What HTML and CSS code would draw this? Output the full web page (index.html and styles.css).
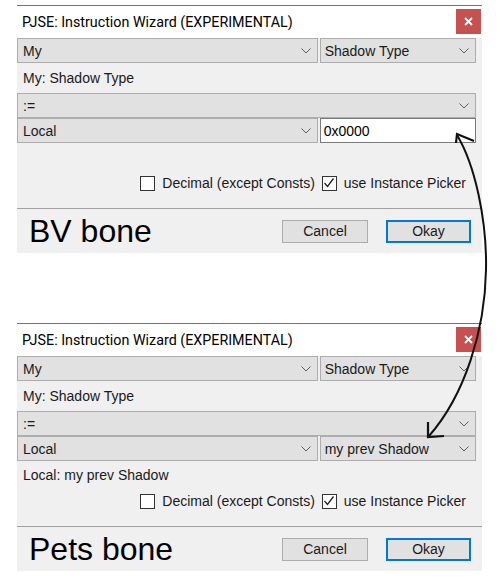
FILE: index.html
```html
<!DOCTYPE html>
<html lang="en">
<head>
  <meta charset="UTF-8">
  <title>PJSE Instruction Wizard</title>
  <link rel="stylesheet" href="styles.css">
</head>
<body>
  <div class="page">
    <div class="dialog">
      <div class="titlebar">
        <span class="title">PJSE: Instruction Wizard (EXPERIMENTAL)</span>
        <div class="close"><svg width="9" height="9" viewBox="0 0 9 9"><path d="M1 1L8 8M8 1L1 8" stroke="#fff" stroke-width="1.8"/></svg></div>
      </div>
      <div class="body">
        <div class="row">
          <div class="combo wide"><span>My</span><svg class="chev" width="10" height="6" viewBox="0 0 10 6"><path d="M0.5 0.5L5 5L9.5 0.5" fill="none" stroke="#606060"/></svg></div>
          <div class="combo narrow"><span>Shadow Type</span><svg class="chev" width="10" height="6" viewBox="0 0 10 6"><path d="M0.5 0.5L5 5L9.5 0.5" fill="none" stroke="#606060"/></svg></div>
        </div>
        <div class="label tall">My: Shadow Type</div>
        <div class="combo full"><span>:=</span><svg class="chev" width="10" height="6" viewBox="0 0 10 6"><path d="M0.5 0.5L5 5L9.5 0.5" fill="none" stroke="#606060"/></svg></div>
        <div class="row">
          <div class="combo wide"><span>Local</span><svg class="chev" width="10" height="6" viewBox="0 0 10 6"><path d="M0.5 0.5L5 5L9.5 0.5" fill="none" stroke="#606060"/></svg></div>
          <div class="textbox narrow">0x0000</div>
        </div>
        <div class="label"></div>
        <div class="checks">
          <span class="box"></span><span class="check-text">Decimal (except Consts)</span>
          <span class="box"><svg width="12" height="12" viewBox="0 0 12 12"><path d="M1.5 6L4.5 9.5L10.5 1.5" fill="none" stroke="#222" stroke-width="1.3"/></svg></span><span class="check-text">use Instance Picker</span>
        </div>
      </div>
      <div class="footer">
        <span class="caption">BV bone</span>
        <div class="buttons">
          <div class="btn">Cancel</div>
          <div class="btn default">Okay</div>
        </div>
      </div>
    </div>

    <div class="dialog second">
      <div class="titlebar">
        <span class="title">PJSE: Instruction Wizard (EXPERIMENTAL)</span>
        <div class="close"><svg width="9" height="9" viewBox="0 0 9 9"><path d="M1 1L8 8M8 1L1 8" stroke="#fff" stroke-width="1.8"/></svg></div>
      </div>
      <div class="body">
        <div class="row">
          <div class="combo wide"><span>My</span><svg class="chev" width="10" height="6" viewBox="0 0 10 6"><path d="M0.5 0.5L5 5L9.5 0.5" fill="none" stroke="#606060"/></svg></div>
          <div class="combo narrow"><span>Shadow Type</span><svg class="chev" width="10" height="6" viewBox="0 0 10 6"><path d="M0.5 0.5L5 5L9.5 0.5" fill="none" stroke="#606060"/></svg></div>
        </div>
        <div class="label tall">My: Shadow Type</div>
        <div class="combo full"><span>:=</span><svg class="chev" width="10" height="6" viewBox="0 0 10 6"><path d="M0.5 0.5L5 5L9.5 0.5" fill="none" stroke="#606060"/></svg></div>
        <div class="row">
          <div class="combo wide"><span>Local</span><svg class="chev" width="10" height="6" viewBox="0 0 10 6"><path d="M0.5 0.5L5 5L9.5 0.5" fill="none" stroke="#606060"/></svg></div>
          <div class="combo narrow"><span>my prev Shadow</span><svg class="chev" width="10" height="6" viewBox="0 0 10 6"><path d="M0.5 0.5L5 5L9.5 0.5" fill="none" stroke="#606060"/></svg></div>
        </div>
        <div class="label">Local: my prev Shadow</div>
        <div class="checks">
          <span class="box"></span><span class="check-text">Decimal (except Consts)</span>
          <span class="box"><svg width="12" height="12" viewBox="0 0 12 12"><path d="M1.5 6L4.5 9.5L10.5 1.5" fill="none" stroke="#222" stroke-width="1.3"/></svg></span><span class="check-text">use Instance Picker</span>
        </div>
      </div>
      <div class="footer">
        <span class="caption">Pets bone</span>
        <div class="buttons">
          <div class="btn">Cancel</div>
          <div class="btn default">Okay</div>
        </div>
      </div>
    </div>

    <!-- hand-drawn arrow linking the two fields -->
    <svg class="arrow" width="500" height="580" viewBox="0 0 500 580">
      <path d="M457 135 C475 165 487 220 486 270 C485 330 465 395 429 436" fill="none" stroke="#111" stroke-width="2"/>
      <path d="M456 143 L457 134 L474 141" fill="none" stroke="#111" stroke-width="2.2"/>
      <path d="M428 422 L428 437 L444 436" fill="none" stroke="#111" stroke-width="2.2"/>
    </svg>
  </div>
</body>
</html>
```

FILE: styles.css
```css
body { margin: 0; background: #fff; font-family: "Liberation Sans", Arial, sans-serif; font-size: 14px; color: #1a1a1a; }
.page { position: relative; width: 500px; height: 580px; padding-top: 5px; box-sizing: border-box; }
.dialog { margin-left: 17px; width: 465px; border-top: 1px solid #737373; }
.dialog.second { margin-top: 70px; }

.titlebar { height: 32px; background: #fff; display: flex; justify-content: space-between; align-items: flex-start; }
.title { font-family: Roboto, "Liberation Sans", sans-serif; font-size: 14.3px; color: #000; line-height: 32px; padding-left: 5px; }
.close { width: 25px; height: 25px; margin: 3px 1px 0 0; background: #c75050; display: flex; align-items: center; justify-content: center; }

.body { background: #f0f0f0; padding: 0 6px 13px 0; }
.row { display: flex; gap: 2px; }
.combo, .textbox { height: 25px; box-sizing: border-box; display: flex; align-items: center; justify-content: space-between; padding: 0 6px 0 5px; }
.combo { background: #e1e1e1; border: 1px solid #adadad; }
.narrow.combo { padding-left: 4px; }
.textbox { background: #fff; border: 1px solid #7a7a7a; padding-left: 3px; color: #000; }
.wide { width: 302px; }
.narrow { width: 157px; }
.full { width: 459px; }
.chev { flex: none; }

.label { height: 28px; line-height: 28px; padding-left: 6px; }
.label.tall { height: 30px; line-height: 30px; }

.checks { height: 24px; display: flex; align-items: center; justify-content: flex-end; padding-right: 10px; }
.box { width: 13px; height: 13px; border: 1px solid #333; background: #fff; margin-right: 7px; display: flex; align-items: center; justify-content: center; }
.check-text { margin-right: 7px; }
.check-text:last-child { margin-right: 0; }

.footer { height: 44px; background: #f0f0f0; border-top: 1px solid #a0a0a0; display: flex; align-items: center; justify-content: space-between; padding: 0 11px 0 12px; }
.caption { font-size: 32px; color: #000; }
.buttons { display: flex; gap: 18px; }
.btn { width: 86px; height: 23px; box-sizing: border-box; background: #e1e1e1; border: 1px solid #adadad; display: flex; align-items: center; justify-content: center; }
.btn.default { width: 85px; border: 2px solid #0078d7; }

.arrow { position: absolute; left: 0; top: 0; pointer-events: none; }
```
